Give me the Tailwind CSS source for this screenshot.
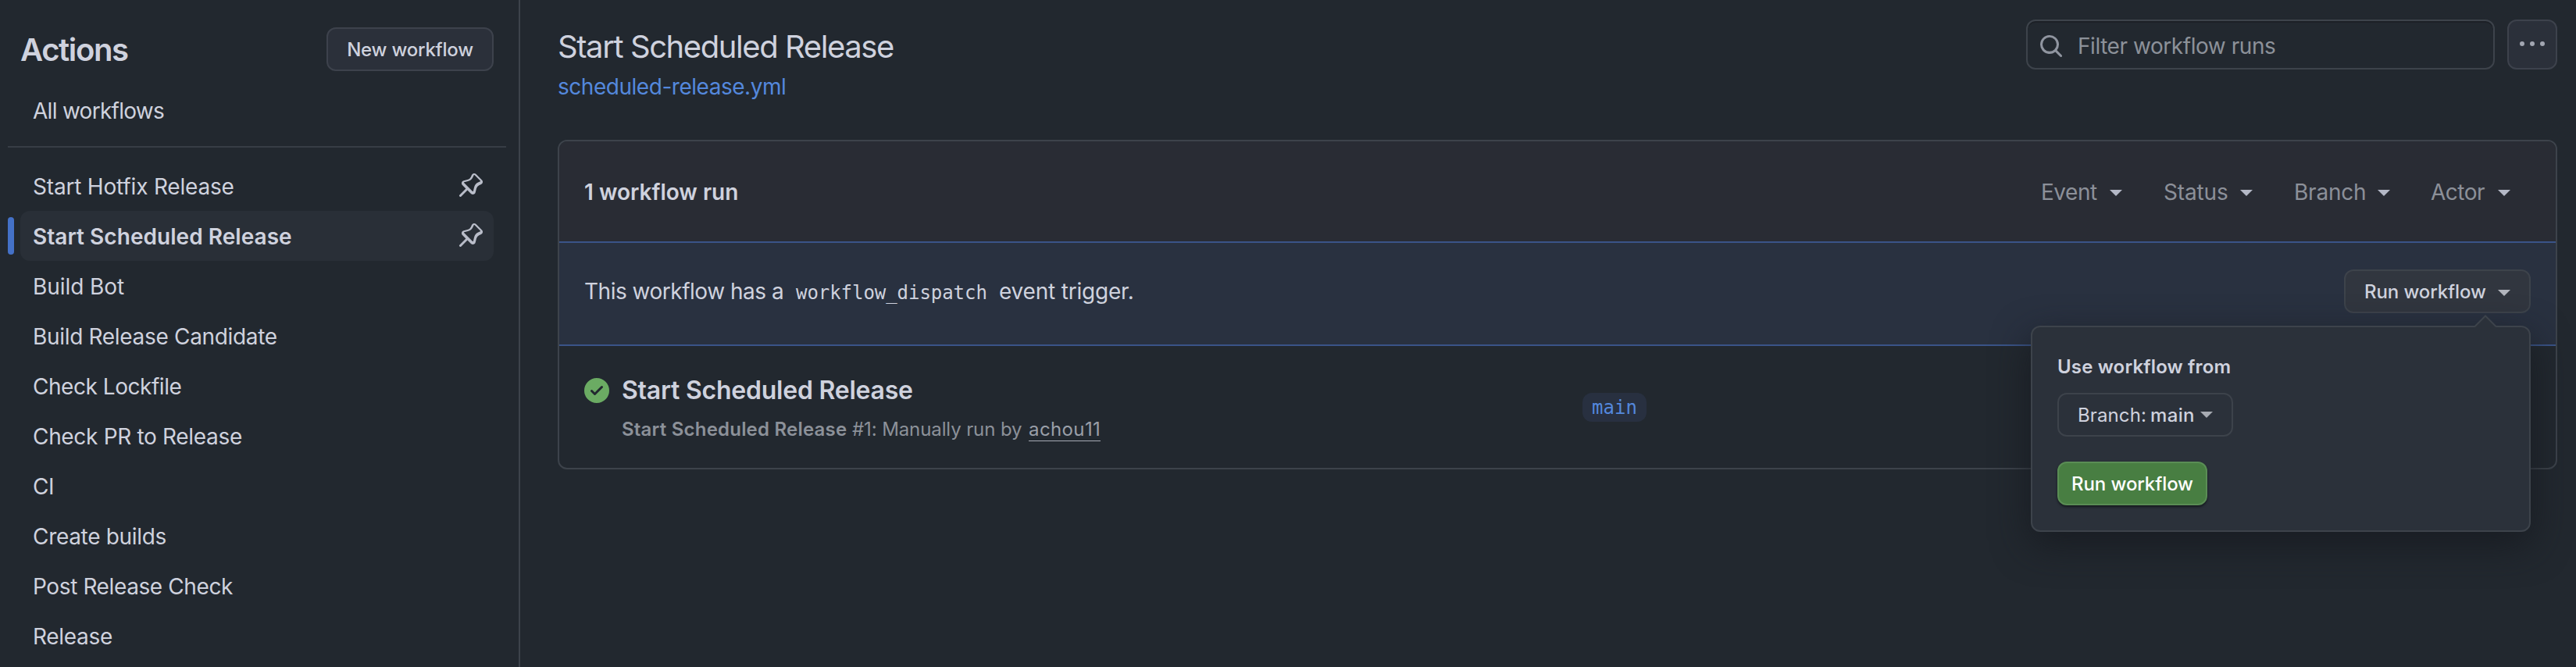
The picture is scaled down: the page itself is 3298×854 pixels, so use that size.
<!DOCTYPE html>
<html lang="en">
<head>
<meta charset="utf-8">
<title>Actions</title>
<script src="https://cdn.jsdelivr.net/npm/@tailwindcss/browser@4"></script>
</head>
<body class="bg-[#22282f] text-[#cfd2de] font-[Inter,'Liberation_Sans',sans-serif] text-[28px] whitespace-nowrap overflow-hidden">
<svg class="hidden">
  <symbol id="pin" viewBox="0 0 16 16"><path d="m11.294.984 3.722 3.722a1.75 1.75 0 0 1-.504 2.826l-1.327.613a3.089 3.089 0 0 0-1.707 2.084l-.584 2.454c-.317 1.332-1.972 1.8-2.94.832L5.75 11.311 1.78 15.28a.749.749 0 1 1-1.06-1.06l3.969-3.97-2.204-2.204c-.968-.968-.5-2.623.832-2.94l2.454-.584a3.08 3.08 0 0 0 2.084-1.707l.613-1.327a1.75 1.75 0 0 1 2.826-.504ZM6.283 9.23l2.73 2.73a.25.25 0 0 0 .42-.119l.584-2.454a4.586 4.586 0 0 1 2.537-3.098l1.328-.613a.25.25 0 0 0 .072-.404l-3.722-3.722a.25.25 0 0 0-.404.072l-.613 1.328a4.584 4.584 0 0 1-3.098 2.537l-2.454.584a.25.25 0 0 0-.119.42l2.73 2.73Z"/></symbol>
  <symbol id="caret" viewBox="0 0 16 8"><path d="M0 0h16L8 8Z"/></symbol>
</svg>
<div class="flex h-[854px] w-[3298px]">
  <aside class="w-[666px] shrink-0 border-r-2 border-[#3d434b] pt-[35px]">
    <div class="flex h-14 items-center justify-between pl-[26px] pr-8">
      <h2 class="pt-0.5 text-[40px] font-semibold leading-[60px] tracking-[-1.37px]">Actions</h2>
      <a class="flex h-14 w-[214px] items-center justify-center rounded-xl border-2 border-[#3d424c] bg-[#2b303a] pt-0.5 text-2xl font-medium tracking-[-0.22px]">New workflow</a>
    </div>
    <nav>
      <div class="mt-[19px] flex h-16 items-center pl-[42px] tracking-[-0.72px]">All workflows</div>
      <div class="ml-[10px] mr-4 mt-[13px] h-0.5 bg-[#373d45]"></div>
      <ul class="mt-[17px] pl-[10px] pr-8">
        <li class="flex h-16 items-center justify-between pl-8 pr-[13px] pt-px tracking-[-0.19px]">Start Hotfix Release<svg class="mb-[3px] size-8 fill-[#b9bdc9]"><use href="#pin"/></svg></li>
        <li class="flex h-16 items-center gap-2">
          <span class="h-12 w-2 rounded-full bg-[#4471c7]"></span>
          <span class="flex h-16 flex-1 items-center justify-between rounded-xl bg-[#292f37] pl-4 pr-[13px] pt-px font-semibold tracking-[0.04px]">Start Scheduled Release<svg class="mb-[3px] size-8 fill-[#b9bdc9]"><use href="#pin"/></svg></span>
        </li>
        <li class="flex h-16 items-center pl-8 pt-px tracking-[-0.07px]">Build Bot</li>
        <li class="flex h-16 items-center pl-8 pt-px tracking-[-0.32px]">Build Release Candidate</li>
        <li class="flex h-16 items-center pl-8 pt-px tracking-[-0.46px]">Check Lockfile</li>
        <li class="flex h-16 items-center pl-8 pt-px tracking-[-0.32px]">Check PR to Release</li>
        <li class="flex h-16 items-center pl-8 pt-px tracking-[-0.45px]">CI</li>
        <li class="flex h-16 items-center pl-8 pt-px tracking-[-0.32px]">Create builds</li>
        <li class="flex h-16 items-center pl-8 pt-px tracking-[-0.39px]">Post Release Check</li>
        <li class="flex h-16 items-center pl-8 pt-px tracking-[-0.3px]">Release</li>
      </ul>
    </nav>
  </aside>

  <main class="flex-1 pl-12 pr-6 pt-[25px]">
    <header class="flex h-[154px] items-start justify-between">
      <div class="pt-[5px]">
        <h1 class="text-[40px] leading-[60px] tracking-[-1.42px]">Start Scheduled Release</h1>
        <a class="block leading-[42px] tracking-[-0.47px] text-[#5488dd]">scheduled-release.yml</a>
      </div>
      <div class="flex gap-4">
        <div class="flex h-16 w-[600px] items-center rounded-xl border-2 border-[#3d434b] pl-[14px] text-[#8c9199] shadow-[inset_0_2px_0_#1c2026]">
          <svg viewBox="0 0 16 16" class="mb-0 mr-[18px] mt-1 size-8 fill-[#9095a0]"><path d="M10.68 11.74a6 6 0 0 1-7.922-8.982 6 6 0 0 1 8.982 7.922l3.04 3.04a.749.749 0 0 1-.326 1.275.749.749 0 0 1-.734-.215ZM11.5 7a4.499 4.499 0 1 0-8.997 0A4.499 4.499 0 0 0 11.5 7Z"/></svg>
          <span class="pt-[3px] tracking-[-0.45px]">Filter workflow runs</span>
        </div>
        <div class="flex size-16 items-center justify-center gap-[7px] rounded-xl border-2 border-[#3d424c] bg-[#2b303a] pb-0.5">
          <i class="size-1.5 rounded-full bg-[#a2a6b1]"></i><i class="size-1.5 rounded-full bg-[#a2a6b1]"></i><i class="size-1.5 rounded-full bg-[#a2a6b1]"></i>
        </div>
      </div>
    </header>

    <section class="h-[422px] rounded-xl border-2 border-[#3d434b]">
      <div class="flex h-32 items-center justify-between rounded-t-[10px] bg-[#292c34] pl-8 pr-[58px]">
        <h3 class="pt-0.5 font-semibold">1 workflow run</h3>
        <div class="flex items-center pt-0.5 text-[#8c9099]">
          <span class="w-[88px] tracking-[-0.47px]">Event</span><svg class="mt-0.5 h-2 w-4 fill-[#b4b8c6]"><use href="#caret"/></svg>
          <span class="ml-[53px] w-[98px] tracking-[-0.14px]">Status</span><svg class="mt-0.5 h-2 w-4 fill-[#b4b8c6]"><use href="#caret"/></svg>
          <span class="ml-[53px] w-[107px] tracking-[-0.22px]">Branch</span><svg class="mt-0.5 h-2 w-4 fill-[#b4b8c6]"><use href="#caret"/></svg>
          <span class="ml-[52px] w-[86px] tracking-[-0.5px]">Actor</span><svg class="mt-0.5 h-2 w-4 fill-[#b4b8c6]"><use href="#caret"/></svg>
        </div>
      </div>
      <div class="flex h-[134px] items-start justify-between border-y-2 border-[#3a5488] bg-[#293140] pl-8 pr-8 pt-[34px]">
        <p class="flex h-14 items-center">
          <span class="w-[271px] tracking-[-0.49px]">This workflow has a</span>
          <code class="w-[260px] pt-[3px] font-['DejaVu_Sans_Mono',monospace] text-2xl tracking-[-0.05px]">workflow_dispatch</code>
          <span class="tracking-[-0.2px]">event trigger.</span>
        </p>
        <div class="relative">
          <button class="flex h-14 w-[239px] items-center rounded-xl border-2 border-[#3d434b] bg-[#31363f] pl-6 pt-0.5 text-2xl font-medium">
            <span class="w-[171px] text-left tracking-[-0.1px]">Run workflow</span><svg class="mt-0.5 h-2 w-4 fill-[#b2b5bd]"><use href="#caret"/></svg>
          </button>
          <div class="absolute right-0 top-[72px] h-[264px] w-[640px] rounded-xl border-2 border-[#3d434b] bg-[#2b313a] px-8 pt-[33px] shadow-[0_16px_48px_#161a20d9]">
            <svg viewBox="0 0 30 16" class="absolute -top-4 right-[41px] h-4 w-[30px]"><path d="M1 16 15 2l14 14Z" fill="#2b313a"/><path d="M1 15.5 15 1.5l14 14" fill="none" stroke="#3d434b" stroke-width="2"/></svg>
            <p class="text-2xl font-semibold leading-9 tracking-[0.15px]">Use workflow from</p>
            <button class="mt-[15px] flex h-14 w-[225px] items-center rounded-xl border-2 border-[#3d434b] pl-6 pt-0.5 text-left text-2xl">
              <span class="w-[93px] tracking-[0.12px]">Branch:</span><span class="w-16 font-medium tracking-[0.34px]">main</span><svg class="mb-0.5 h-2 w-4 fill-[#a7abb2]"><use href="#caret"/></svg>
            </button>
            <button class="mt-8 flex h-14 w-48 items-center justify-center rounded-xl border-2 border-[#5a8d55] bg-[#487e42] pt-0.5 text-2xl font-medium tracking-[-0.1px] text-white shadow-[0_2px_3px_#14181d]">Run workflow</button>
          </div>
        </div>
      </div>
      <div class="flex h-[156px] items-start pl-8 pt-[38px]">
        <svg viewBox="0 0 16 16" class="mt-[3px] size-8 fill-[#6bab63]"><path d="M8 16A8 8 0 1 1 8 0a8 8 0 0 1 0 16Zm3.78-9.72a.751.751 0 0 0-.018-1.042.751.751 0 0 0-1.042-.018L6.75 9.19 5.28 7.72a.751.751 0 0 0-1.042.018.751.751 0 0 0-.018 1.042l2 2a.75.75 0 0 0 1.06 0Z"/></svg>
        <div class="w-[1230px] pl-4">
          <h4 class="text-[32px] font-semibold leading-[38px] tracking-[-0.23px]">Start Scheduled Release</h4>
          <p class="mt-[14px] flex h-[34px] text-2xl leading-[34px] text-[#8c9199]">
            <span class="w-[295px] font-semibold tracking-[0.21px]">Start Scheduled Release</span>
            <span class="w-[226px] tracking-[-0.11px]">#1: Manually run by</span>
            <a class="h-[32px] w-[92px] border-b border-[#a6abb4] tracking-[0.4px] text-[#9a9fa8]">achou11</a>
          </p>
        </div>
        <span class="ml-4 mt-[22px] flex h-[37px] w-[82px] items-center justify-center rounded-xl bg-[#283040] font-['DejaVu_Sans_Mono',monospace] text-2xl text-[#5488dd]">main</span>
      </div>
    </section>
  </main>
</div>
</body>
</html>
